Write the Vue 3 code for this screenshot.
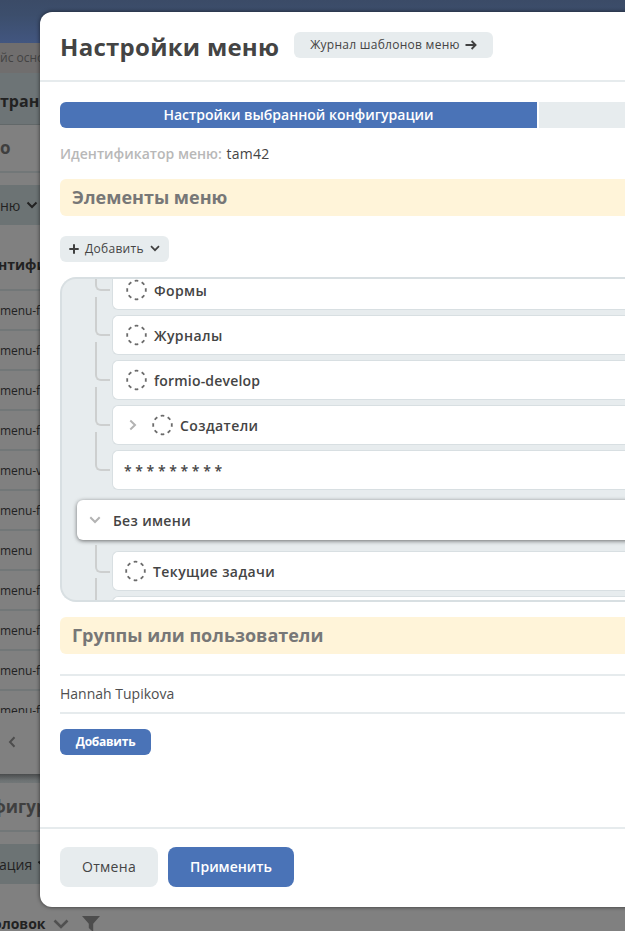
<script setup>
const rows = ['menu-f', 'menu-f', 'menu-f', 'menu-f', 'menu-v', 'menu-f', 'menu', 'menu-f', 'menu-f', 'menu-f', 'menu-f']
const items = [
  { label: 'Формы', icon: true },
  { label: 'Журналы', icon: true },
  { label: 'formio-develop', icon: true, latin: true },
  { label: 'Создатели', icon: true, nested: true },
  { label: '* * * * * * * * *', icon: false }
]
</script>

<template>
  <div class="screen">
    <div class="page">
      <div class="topbar"></div>
      <div class="crumbs">йс осно</div>
      <div class="page-title">тран</div>
      <div class="card-title">о</div>
      <div class="toolbar">
        <span>ню</span>
        <svg width="12" height="8" viewBox="0 0 12 8"><path d="M1.500 1.500 6 6l4.500-4.500" fill="none" stroke="#222" stroke-width="2" /></svg>
      </div>
      <div class="table-head">нтифи</div>
      <div class="table">
        <div v-for="(r, i) in rows" :key="i" class="table-row">{{ r }}</div>
      </div>
      <div class="pager">
        <svg width="8" height="12" viewBox="0 0 8 12"><path d="M6.500 1.200 2 6l4.500 4.800" fill="none" stroke="#4d4d4d" stroke-width="2" /></svg>
      </div>
      <div class="gap"></div>
      <div class="config-title"><span>фигур</span></div>
      <div class="config-bar">
        <span>ация</span>
        <svg width="12" height="8" viewBox="0 0 12 8"><path d="M1.500 1.500 6 6l4.500-4.500" fill="none" stroke="#222" stroke-width="2" /></svg>
      </div>
      <div class="config-head">
        <span>оловок</span>
        <svg width="16" height="10" viewBox="0 0 16 10"><path d="M1.500 1.500 8 8l6.500-6.500" fill="none" stroke="#505050" stroke-width="2.600" /></svg>
        <svg class="funnel" width="18" height="16" viewBox="0 0 18 16"><path d="M0 0h18l-6.800 7.800V16L6.800 12V7.800z" fill="#4d4d4d" /></svg>
      </div>
    </div>

    <div class="modal">
      <header class="modal-head">
        <h1>Настройки меню</h1>
        <button class="btn-link">
          Журнал шаблонов меню
          <svg width="12" height="10" viewBox="0 0 12 10"><path d="M.5 5h10M6.600 1l4 4-4 4" fill="none" stroke="#404040" stroke-width="1.800" /></svg>
        </button>
      </header>
      <main class="modal-body">
        <div class="tabs">
          <div class="tab active">Настройки выбранной конфигурации</div>
          <div class="tab"></div>
        </div>
        <p class="ident"><b>Идентификатор меню:</b> <span>tam42</span></p>
        <h2>Элементы меню</h2>
        <button class="btn-add">
          <svg width="10" height="10" viewBox="0 0 10 10"><path d="M5 .3v9.400M.3 5h9.400" stroke="#404040" stroke-width="2" /></svg>
          <span>Добавить</span>
          <svg width="10" height="7" viewBox="0 0 10 7"><path d="M1 1.200 5 5.200l4-4" fill="none" stroke="#404040" stroke-width="1.700" /></svg>
        </button>
        <div class="tree">
          <div class="branch first">
            <div v-for="item in items" :key="item.label" class="node">
              <i class="link"></i>
              <div class="leaf">
                <svg v-if="item.nested" class="arrow" width="8" height="12" viewBox="0 0 8 12"><path d="M1.300 1.500 6 6l-4.700 4.500" fill="none" stroke="#b3b3b3" stroke-width="2" /></svg>
                <svg v-if="item.icon" class="ring" width="22" height="22" viewBox="0 0 22 22"><circle cx="10.500" cy="11" r="9.300" pathLength="80" /></svg>
                <span :class="{ stars: !item.icon, latin: item.latin }">{{ item.label }}</span>
              </div>
            </div>
          </div>
          <div class="group">
            <svg width="12" height="8" viewBox="0 0 12 8"><path d="M1.300 1.300 6 6l4.700-4.700" fill="none" stroke="#b3b3b3" stroke-width="2" /></svg>
            <span>Без имени</span>
          </div>
          <div class="branch second">
            <div class="node">
              <i class="link short"></i>
              <div class="leaf task">
                <svg class="ring" width="22" height="22" viewBox="0 0 22 22"><circle cx="10.500" cy="11" r="9.300" pathLength="80" /></svg>
                <span>Текущие задачи</span>
              </div>
            </div>
            <div class="node">
              <i class="link"></i>
              <div class="leaf"></div>
            </div>
          </div>
        </div>
        <h2>Группы или пользователи</h2>
        <div class="user">Hannah Tupikova</div>
        <button class="btn-small">Добавить</button>
      </main>
      <footer class="modal-foot">
        <button class="cancel">Отмена</button>
        <button class="apply">Применить</button>
      </footer>
    </div>
  </div>
</template>

<style>
body {
  overflow: hidden;
}
</style>

<style scoped>
* {
  box-sizing: border-box;
}
.screen {
  position: relative;
  width: 625px;
  height: 931px;
  overflow: hidden;
  background: #808080;
  color: #444;
  font-family: "Open Sans", "Noto Sans", sans-serif;
  font-size: 14px;
}
h1, h2, p {
  margin: 0;
}
svg {
  display: block;
  flex: none;
}
button {
  display: flex;
  align-items: center;
  border: 0;
  padding: 0;
  font: inherit;
  color: inherit;
  white-space: nowrap;
}
.page {
  width: 100%;
  white-space: nowrap;
  color: #222;
}
.topbar {
  height: 43px;
  background: linear-gradient(#3b4b67, #3c4e6c 35%, #425680);
}
.crumbs {
  height: 30px;
  line-height: 30px;
  background: #706e6e;
  color: #434343;
  font-size: 12px;
}
.page-title {
  height: 52px;
  line-height: 57px;
  background: #6d7476;
  border-bottom: 1px solid #626869;
  font-size: 16px;
  font-weight: 700;
}
.card-title {
  height: 48px;
  line-height: 46px;
  border-bottom: 2px solid #727778;
  font-size: 17px;
  font-weight: 700;
  color: #3f3f3f;
}
.toolbar {
  display: flex;
  align-items: center;
  gap: 6px;
  height: 40px;
  margin-top: 12px;
  background: #6c7374;
}
.table-head {
  height: 66px;
  line-height: 80px;
  border-bottom: 2px solid #727778;
  font-weight: 700;
  text-indent: -2px;
}
.table {
  height: 422px;
  overflow: hidden;
}
.table-row {
  height: 40px;
  line-height: 40px;
  border-bottom: 2px solid #727778;
  font-size: 12px;
  letter-spacing: -0.1px;
}
.pager {
  display: flex;
  align-items: center;
  height: 61px;
  padding: 0 0 4px 8px;
}
.gap {
  height: 9px;
  background: linear-gradient(#4a4c4d, #6c7172 70%, #727778);
}
.config-title {
  height: 49px;
  line-height: 48px;
  border-bottom: 2px solid #727778;
  font-size: 17px;
  font-weight: 700;
  color: #3f3f3f;
}
.config-title span {
  margin-left: -8px;
}
.config-bar {
  display: flex;
  align-items: center;
  gap: 5px;
  height: 40px;
  margin-top: 12px;
  background: #6c7374;
}
.config-bar span {
  margin-left: -1px;
}
.config-head {
  display: flex;
  align-items: center;
  gap: 7px;
  height: 80px;
  padding-bottom: 1px;
  font-weight: 700;
}
.config-head span {
  margin-left: -7px;
}
.funnel {
  margin-left: 6px;
}

.modal {
  position: absolute;
  left: 40px;
  top: 12px;
  display: flex;
  flex-direction: column;
  width: 616px;
  height: 895px;
  border-radius: 12px 0 0 12px;
  background: #fff;
  box-shadow: 0 0 4px rgba(0, 0, 0, 0.6);
}
.modal-head {
  display: flex;
  align-items: center;
  gap: 15px;
  height: 70px;
  padding: 0 20px 2px;
  border-bottom: 2px solid #e6ebed;
}
h1 {
  width: 219px;
  padding-top: 3px;
  font-size: 24px;
  line-height: 34px;
  font-weight: 700;
  letter-spacing: 0.27px;
  white-space: nowrap;
}
.btn-link {
  gap: 5px;
  height: 26px;
  width: 199px;
  padding-bottom: 1px;
  justify-content: center;
  border-radius: 6px;
  background: #e7ecee;
  font-size: 12px;
  letter-spacing: 0.27px;
}
.modal-body {
  flex: 1;
  padding: 20px 0 0 20px;
}
.tabs {
  display: flex;
  gap: 2px;
  height: 26px;
}
.tab {
  flex: 1;
  background: #e7ecee;
}
.tab.active {
  flex: 0 0 477px;
  border-radius: 6px 0 0 6px;
  background: #4a73b7;
  color: #fff;
  font-weight: 600;
  line-height: 26px;
  text-align: center;
}
.ident {
  margin-top: 16px;
  line-height: 20px;
}
.ident b {
  color: #b8b8b8;
  font-weight: 600;
}
.ident span {
  margin-left: 1px;
  letter-spacing: 0.25px;
}
h2 {
  height: 37px;
  margin-top: 15px;
  padding-left: 12px;
  border-radius: 6px 0 0 6px;
  background: #fff4d9;
  color: #777;
  font-size: 18px;
  line-height: 37px;
  font-weight: 700;
}
.btn-add {
  gap: 6px;
  height: 26px;
  width: 109px;
  margin-top: 20px;
  padding: 0 0 1px 9px;
  border-radius: 6px;
  background: #e7ecee;
  font-size: 12px;
  letter-spacing: 0.3px;
}
.tree {
  height: 325px;
  margin-top: 15px;
  overflow: hidden;
  border: 2px solid #d8dfe2;
  border-right: 0;
  border-radius: 16px 0 0 16px;
  background: #e7ecee;
}
.branch {
  display: flex;
  flex-direction: column;
  gap: 5px;
  padding-left: 33px;
}
.branch.first {
  margin-top: -9px;
}
.node {
  display: flex;
  height: 40px;
}
.link {
  width: 15px;
  height: 39px;
  margin: -18px 2px 0 0;
  border: solid #cdcfcf;
  border-width: 0 0 2px 2px;
  border-radius: 0 0 0 6px;
}
.link.short {
  height: 28px;
  margin-top: -6px;
}
.leaf {
  flex: 1;
  display: flex;
  align-items: center;
  height: 40px;
  padding-left: 13px;
  border: 1px solid #d8dfe2;
  border-right: 0;
  border-radius: 6px 0 0 6px;
  background: #fff;
  font-weight: 600;
  letter-spacing: 0.42px;
}
.leaf.task {
  padding-left: 12px;
}
.latin {
  letter-spacing: 0.2px;
}
.ring {
  margin-right: 6px;
}
.ring circle {
  fill: none;
  stroke: #6b6b6b;
  stroke-width: 1.8;
  stroke-dasharray: 5 5;
  stroke-dashoffset: 2.5;
}
.arrow {
  margin: 0 15px 0 3px;
}
.stars {
  margin-left: -2px;
  letter-spacing: 0;
}
.group {
  display: flex;
  align-items: center;
  gap: 12px;
  height: 40px;
  margin: 10px 0 0 15px;
  padding-left: 12px;
  border-radius: 6px 0 0 6px;
  background: #fff;
  box-shadow: 0 1px 4px rgba(0, 0, 0, 0.55);
  font-weight: 600;
  letter-spacing: 0.35px;
}
.branch.second {
  margin-top: 11px;
}
.user {
  height: 40px;
  margin-top: 20px;
  border: solid #e6ebed;
  border-width: 2px 0;
  color: #4f4f4f;
  line-height: 36px;
}
.btn-small {
  justify-content: center;
  width: 91px;
  height: 26px;
  margin-top: 15px;
  padding-bottom: 1px;
  border-radius: 6px;
  background: #4a73b7;
  color: #fff;
  font-size: 12px;
  font-weight: 700;
  letter-spacing: -0.25px;
}
.modal-foot {
  display: flex;
  gap: 10px;
  height: 80px;
  padding: 18px 20px;
  border-top: 2px solid #e6ebed;
}
.modal-foot button {
  justify-content: center;
  height: 40px;
  padding-bottom: 1px;
  border-radius: 8px;
}
.modal-foot .cancel {
  width: 98px;
  background: #e7ecee;
  letter-spacing: 0.3px;
}
.modal-foot .apply {
  width: 126px;
  background: #4a73b7;
  color: #fff;
  font-weight: 600;
}
</style>
